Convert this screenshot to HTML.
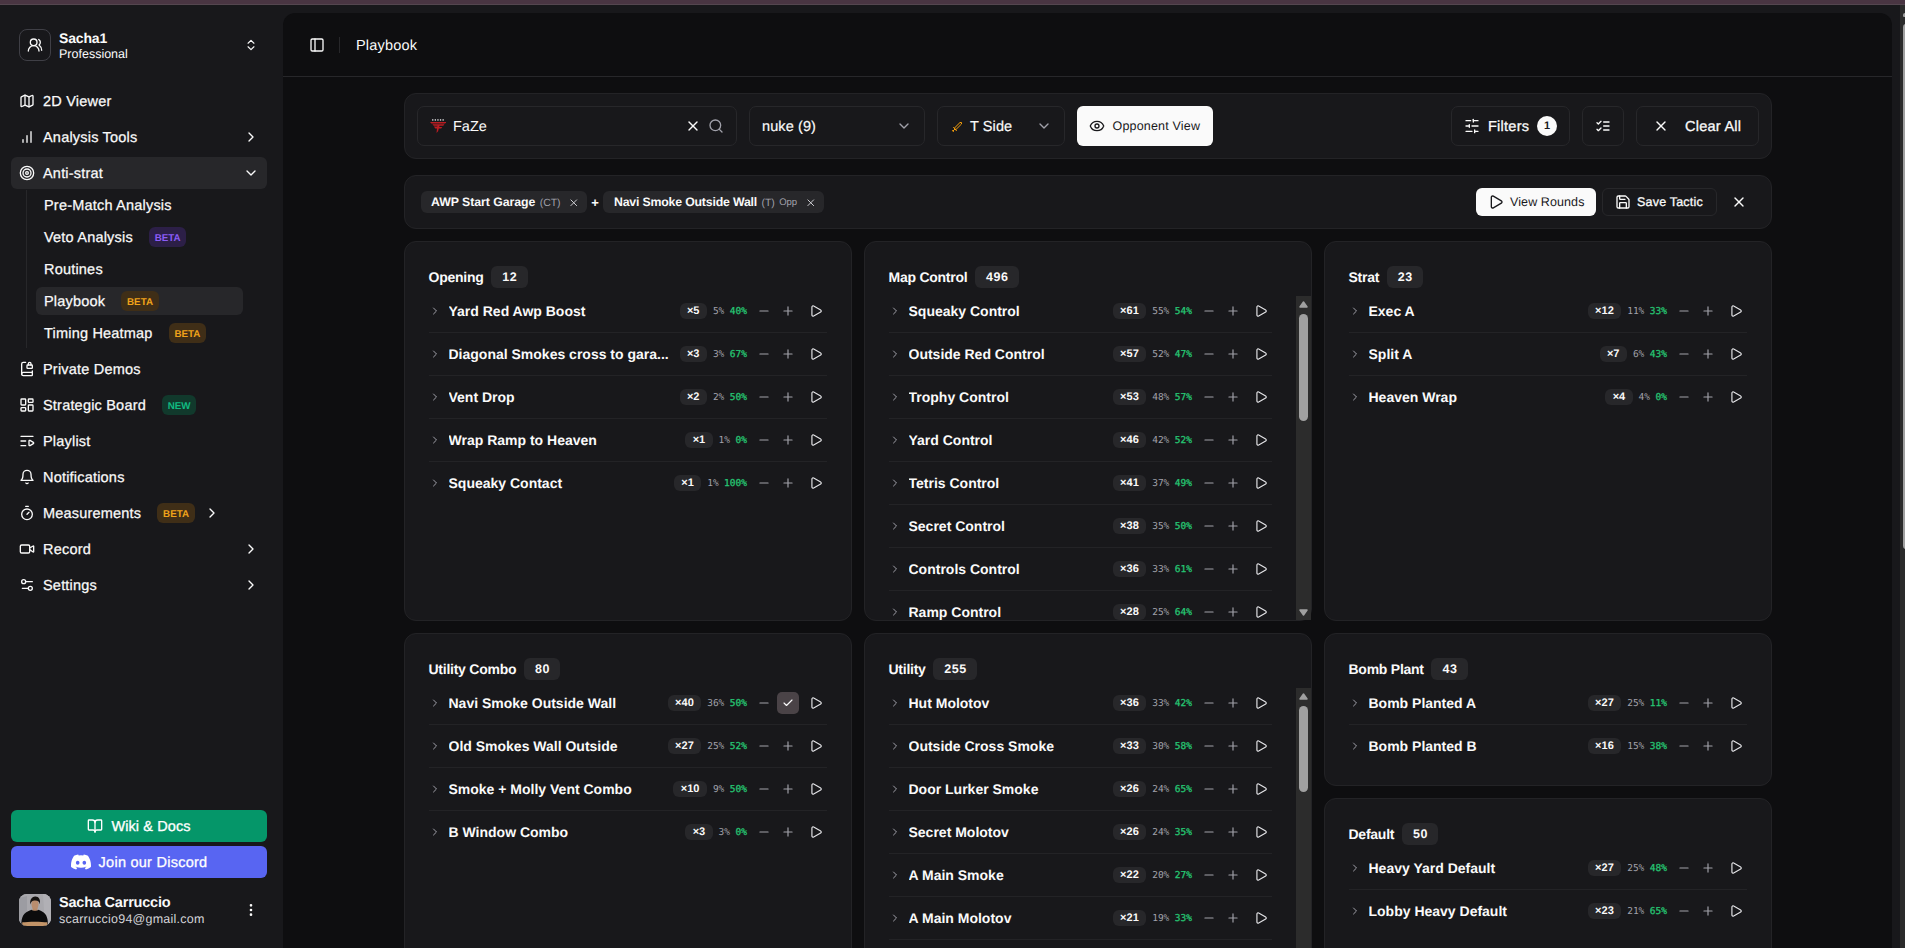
<!DOCTYPE html><html lang="en"><head><meta charset="utf-8"><title>Playbook</title><style>
*{box-sizing:border-box;margin:0;padding:0}
html,body{width:1905px;height:948px;overflow:hidden;background:#18181b}
body{position:relative;font-family:"Liberation Sans",sans-serif;color:#fafafa;font-size:14px;text-rendering:geometricPrecision}
svg{display:block;fill:none;stroke:currentColor;stroke-width:2;stroke-linecap:round;stroke-linejoin:round}
.abs{position:absolute}
#topstrip{left:0;top:0;width:1905px;height:5px;background:#493542;border-bottom:1px solid #54464f}
#sidebar{left:0;top:5px;width:283px;height:943px;background:#18181b}
#main{left:283px;top:13px;width:1609px;height:960px;background:#0e0e10;border-radius:12px 12px 0 0}
#hdrline{left:283px;top:76px;width:1609px;height:1px;background:#27272a}
#vscroll{left:1900px;top:5px;width:5px;height:943px;background:#2b2b2b}
#vthumb{left:1903px;top:24px;width:6px;height:524.5px;background:#a0a0a0;border-radius:3px}
.sb-item{position:absolute;left:11px;width:256px;height:32px;border-radius:6px;display:flex;align-items:center;padding-left:8px;font-size:14.5px;letter-spacing:.2px;font-weight:400;color:#fafafa}
.sb-item svg{width:16px;height:16px;margin-right:8px;flex:none;stroke-width:2}
.sb-item .chev{position:absolute;right:8px;top:8px;margin:0;width:16px;height:16px}
.sb-item.active{background:#27272a}
.sb-item>span:first-of-type,.sb-sub>span:first-of-type{position:relative;top:1px;-webkit-text-stroke:.25px currentColor}
.sb-sub{position:absolute;left:36px;width:207px;height:28px;border-radius:6px;display:flex;align-items:center;padding-left:8px;font-size:14.5px;letter-spacing:.2px;color:#fafafa}
.sb-sub.active{background:#27272a}
.badge{display:inline-block;font-size:9.800px;font-weight:700;border-radius:6px;padding:0 5.800px;height:20px;line-height:23px;margin-left:16px;letter-spacing:0}
.b-purple{background:#2c1f47;color:#8b5cf6}
.b-amber{background:#3f2e17;color:#f0a31a}
.b-green{background:#11392c;color:#10b981}
.card{position:absolute;background:#18181b;border:1px solid #232326;border-radius:12px}
.ctitle{position:absolute;left:23.500px;top:24px;font-size:14px;font-weight:700;letter-spacing:-.25px;display:flex;align-items:center;height:22px;white-space:nowrap}
.cnt{display:inline-block;margin-left:7.500px;background:#27272a;border-radius:6px;height:22px;line-height:22px;padding:0 10.500px 0 11.200px;font-size:12.500px;font-weight:700;letter-spacing:.55px}
.rows{position:absolute;left:0;top:48px;right:0;bottom:0;overflow:hidden;border-radius:0 0 11px 11px}
.row{position:absolute;left:24px;height:43px;display:flex;align-items:center;border-bottom:1px solid #232326}
.row.last{border-bottom-color:transparent}
.row .chv{width:12px;height:12px;color:#a1a1aa;margin-left:0;flex:none;stroke-width:2}
.row .nm{margin-left:7.500px;font-size:14px;font-weight:700;letter-spacing:0;white-space:nowrap;overflow:hidden;flex:1 1 auto;min-width:0;color:#fafafa}
.row .x{flex:none;background:#27272a;border-radius:6px;height:16px;line-height:17px;padding:0 7.400px;font-size:11px;font-weight:700;color:#fafafa;margin-left:6px}
.row .p1{flex:none;font-family:"DejaVu Sans Mono","Liberation Mono",monospace;font-size:9.5px;color:#a1a1aa;margin-left:6px}
.row .p2{flex:none;font-family:"DejaVu Sans Mono","Liberation Mono",monospace;font-size:9.5px;font-weight:400;-webkit-text-stroke:.3px #26c472;color:#26c472;margin-left:5.500px}
.row .bt{flex:none;width:24px;height:24px;display:flex;align-items:center;justify-content:center;color:#a1a1aa}
.row .bt svg{width:14px;height:14px}
.row .mn{margin-left:5px}
.row .py{margin-left:3.500px;margin-right:-.5px;color:#e4e4e7}
.row .chk{flex:none;margin:0 1px;width:22px;height:22px;border-radius:5px;background:#4a4347;display:flex;align-items:center;justify-content:center;color:#fafafa}
.row .chk svg{width:12px;height:12px;stroke-width:2.300}
.sbar{position:absolute;width:15px;background:#2c2c2c}
.sbar .th{position:absolute;left:3px;width:9px;border-radius:5px;background:#a0a0a0}
.sbar svg{position:absolute;left:3px;width:9px;height:7px;fill:#a0a0a0;stroke:#a0a0a0;stroke-width:1.500}
.sbar .up{top:5px}
.sbar .dn{bottom:4px}
.md{-webkit-text-stroke:.3px currentColor}
.md2{-webkit-text-stroke:.18px currentColor}
.fld{position:absolute;border:1px solid #27272a;border-radius:7px;background:#18181b;display:flex;align-items:center;font-size:14.5px;white-space:nowrap}
.btnw{position:absolute;background:#fafafa;color:#18181b;border-radius:6px;display:flex;align-items:center;white-space:nowrap}
.chip{position:absolute;top:15px;height:22px;background:#27272a;border-radius:6px;display:flex;align-items:center;font-size:12.300px;font-weight:700;white-space:nowrap;letter-spacing:-.05px}
.chip .g{font-weight:400;color:#a1a1aa;font-size:10.500px;margin-left:4.500px;position:relative;top:.8px}
.chip svg{width:11.500px;height:11.500px;color:#d4d4d8}
</style></head><body>
<div id="topstrip" class="abs"></div>
<div id="sidebar" class="abs"></div>
<div id="main" class="abs"></div>
<div id="hdrline" class="abs"></div>
<div id="vscroll" class="abs"></div><div id="vthumb" class="abs"></div><div class="abs" style="left:1903px;top:13px;width:4px;height:4px;background:#a0a0a0;border-radius:2px 0 0 1px"></div>
<div class="abs" style="left:19px;top:29px;width:32px;height:32px;border:1px solid #3f3f46;border-radius:8px;display:flex;align-items:center;justify-content:center"><svg viewBox="0 0 24 24" style="width:16px;height:16px"><path d="M18 21a8 8 0 0 0-16 0"/><circle cx="10" cy="8" r="5"/><path d="M22 20c0-3.37-2-6.5-4-8a5 5 0 0 0-.45-8.3"/></svg></div>
<div class="abs" style="left:59px;top:30px;font-size:14px;font-weight:700;letter-spacing:-.15px;line-height:16px">Sacha1</div>
<div class="abs" style="left:59px;top:47px;font-size:12.5px;line-height:14px">Professional</div>
<svg viewBox="0 0 24 24" class="abs" style="left:244px;top:38px;width:14px;height:14px;position:absolute;stroke-width:2"><path d="m7 15 5 5 5-5"/><path d="m7 9 5-5 5 5"/></svg>
<div class="sb-item" style="top:85px"><svg viewBox="0 0 24 24"><path d="M14.106 5.553a2 2 0 0 0 1.788 0l3.659-1.83A1 1 0 0 1 21 4.619v12.764a1 1 0 0 1-.553.894l-4.553 2.277a2 2 0 0 1-1.788 0l-4.212-2.106a2 2 0 0 0-1.788 0l-3.659 1.83A1 1 0 0 1 3 19.381V6.618a1 1 0 0 1 .553-.894l4.553-2.277a2 2 0 0 1 1.788 0z"/><path d="M15 5.764v15"/><path d="M9 3.236v15"/></svg><span>2D Viewer</span></div>
<div class="sb-item" style="top:121px"><svg viewBox="0 0 24 24"><line x1="12" x2="12" y1="20" y2="10"/><line x1="18" x2="18" y1="20" y2="4"/><line x1="6" x2="6" y1="20" y2="16"/></svg><span>Analysis Tools</span><svg viewBox="0 0 24 24" class="chev"><path d="m9 18 6-6-6-6"/></svg></div>
<div class="sb-item active" style="top:157px"><svg viewBox="0 0 24 24"><circle cx="12" cy="12" r="10"/><circle cx="12" cy="12" r="6"/><circle cx="12" cy="12" r="2"/></svg><span>Anti-strat</span><svg viewBox="0 0 24 24" class="chev"><path d="m6 9 6 6 6-6"/></svg></div>
<div class="sb-item" style="top:353px"><svg viewBox="0 0 24 24"><path d="M18 6V4a2 2 0 1 0-4 0v2"/><path d="M20 15v6a1 1 0 0 1-1 1H6.5a1 1 0 0 1 0-5H20"/><path d="M4 19.500v-15A2.500 2.500 0 0 1 6.500 2H10"/><rect x="12" y="6" width="8" height="5" rx="1"/></svg><span>Private Demos</span></div>
<div class="sb-item" style="top:389px"><svg viewBox="0 0 24 24"><rect width="7" height="9" x="3" y="3" rx="1"/><rect width="7" height="5" x="14" y="3" rx="1"/><rect width="7" height="9" x="14" y="12" rx="1"/><rect width="7" height="5" x="3" y="16" rx="1"/></svg><span>Strategic Board</span><span class="badge b-green">NEW</span></div>
<div class="sb-item" style="top:425px"><svg viewBox="0 0 24 24"><path d="M21 5H3"/><path d="M10 12H3"/><path d="M10 19H3"/><path d="M15 12.003a1 1 0 0 1 1.517-.859l4.997 2.997a1 1 0 0 1 0 1.718l-4.997 2.997a1 1 0 0 1-1.517-.860z"/></svg><span>Playlist</span></div>
<div class="sb-item" style="top:461px"><svg viewBox="0 0 24 24"><path d="M6 8a6 6 0 0 1 12 0c0 7 3 9 3 9H3s3-2 3-9"/><path d="M10.300 21a1.940 1.940 0 0 0 3.400 0"/></svg><span>Notifications</span></div>
<div class="sb-item" style="top:497px"><svg viewBox="0 0 24 24"><line x1="10" x2="14" y1="2" y2="2"/><line x1="12" x2="15" y1="14" y2="11"/><circle cx="12" cy="14" r="8"/></svg><span>Measurements</span><span class="badge b-amber">BETA</span><svg viewBox="0 0 24 24" style="margin-left:8.800px;margin-right:0"><path d="m9 18 6-6-6-6"/></svg></div>
<div class="sb-item" style="top:533px"><svg viewBox="0 0 24 24"><path d="m16 13 5.223 3.482a.5.500 0 0 0 .777-.416V7.870a.5.500 0 0 0-.752-.432L16 10.500"/><rect x="2" y="6" width="14" height="12" rx="2"/></svg><span>Record</span><svg viewBox="0 0 24 24" class="chev"><path d="m9 18 6-6-6-6"/></svg></div>
<div class="sb-item" style="top:569px"><svg viewBox="0 0 24 24"><path d="M20 7h-9"/><path d="M14 17H5"/><circle cx="17" cy="17" r="3"/><circle cx="7" cy="7" r="3"/></svg><span>Settings</span><svg viewBox="0 0 24 24" class="chev"><path d="m9 18 6-6-6-6"/></svg></div>
<div class="abs" style="left:26px;top:190px;width:1px;height:158px;background:#27272a"></div>
<div class="sb-sub" style="top:191px"><span>Pre-Match Analysis</span></div>
<div class="sb-sub" style="top:223px"><span>Veto Analysis</span><span class="badge b-purple">BETA</span></div>
<div class="sb-sub" style="top:255px"><span>Routines</span></div>
<div class="sb-sub active" style="top:287px"><span>Playbook</span><span class="badge b-amber">BETA</span></div>
<div class="sb-sub" style="top:319px"><span>Timing Heatmap</span><span class="badge b-amber">BETA</span></div>
<div class="abs" style="left:11px;top:810px;width:256px;height:32px;border-radius:6px;background:#059669;display:flex;align-items:center;justify-content:center;font-size:14.5px;font-weight:400;color:#fff"><svg viewBox="0 0 24 24" style="width:16px;height:16px;margin-right:8px"><path d="M12 7v14"/><path d="M3 18a1 1 0 0 1-1-1V4a1 1 0 0 1 1-1h5a4 4 0 0 1 4 4 4 4 0 0 1 4-4h5a1 1 0 0 1 1 1v13a1 1 0 0 1-1 1h-6a3 3 0 0 0-3 3 3 3 0 0 0-3-3z"/></svg><span class="md" style="position:relative;top:1px;letter-spacing:.1px">Wiki &amp; Docs</span></div>
<div class="abs" style="left:11px;top:846px;width:256px;height:32px;border-radius:6px;background:#5865f2;display:flex;align-items:center;justify-content:center;font-size:14.5px;font-weight:400;color:#fff"><svg viewBox="0 0 24 24" style="width:20px;height:20px;margin-right:8px;fill:#fff;stroke:none"><path d="M20.317 4.370a19.791 19.791 0 0 0-4.885-1.515.074.074 0 0 0-.079.037c-.211.375-.445.865-.608 1.250a18.270 18.270 0 0 0-5.487 0 12.640 12.640 0 0 0-.618-1.250.077.077 0 0 0-.078-.037 19.736 19.736 0 0 0-4.885 1.515.070.070 0 0 0-.032.028C.533 9.046-.319 13.580.099 18.058a.082.082 0 0 0 .031.056 19.900 19.900 0 0 0 5.993 3.030.078.078 0 0 0 .084-.028c.462-.630.873-1.295 1.226-1.994a.076.076 0 0 0-.042-.106 13.107 13.107 0 0 1-1.872-.892.077.077 0 0 1-.008-.128c.126-.094.252-.192.372-.291a.074.074 0 0 1 .078-.011c3.928 1.793 8.180 1.793 12.061 0a.074.074 0 0 1 .079.010c.120.099.246.198.373.292a.077.077 0 0 1-.007.128 12.299 12.299 0 0 1-1.873.891.077.077 0 0 0-.041.107c.360.698.772 1.363 1.225 1.993a.076.076 0 0 0 .084.029 19.839 19.839 0 0 0 6.002-3.030.077.077 0 0 0 .031-.055c.500-5.177-.838-9.674-3.548-13.660a.061.061 0 0 0-.031-.029zM8.020 15.331c-1.182 0-2.157-1.086-2.157-2.419 0-1.333.956-2.419 2.157-2.419 1.211 0 2.176 1.095 2.157 2.419 0 1.333-.956 2.419-2.157 2.419zm7.975 0c-1.183 0-2.157-1.086-2.157-2.419 0-1.333.955-2.419 2.157-2.419 1.211 0 2.176 1.095 2.157 2.419 0 1.333-.946 2.419-2.157 2.419z"/></svg><span class="md" style="position:relative;top:1px;letter-spacing:.25px">Join our Discord</span></div>
<div class="abs" style="left:19px;top:894px;width:32px;height:32px;border-radius:8px;overflow:hidden;background:#a9a9ad"><svg viewBox="0 0 32 32" style="width:32px;height:32px;stroke:none"><rect width="32" height="32" fill="#a9a8ad"/><path d="M0 4 8 2v30H0z" fill="#9c9ca2"/><path d="M24 0h8v32h-6z" fill="#b1b0b5"/><rect x="13.500" y="13" width="5" height="5" fill="#b88a68"/><ellipse cx="16" cy="10.300" rx="3.500" ry="4.600" fill="#b98d6e"/><path d="M11.400 10.500c-.9-4.500 1.200-8 4.800-8.100 3.700-.1 5.600 3.300 4.700 7.800-.6-2.400-1.500-3.700-4.700-3.700s-4 1.300-4.800 4z" fill="#14110f"/><path d="M2.300 32c0-9 1.700-13.500 10.200-16.300 1.500 1.500 5.500 1.500 7 0C27.500 18.500 29 23 29 32z" fill="#0c0c0d"/><path d="M3.300 28.300c6-.9 19-.9 25 0l.3 3.700H3.100z" fill="#c39468"/></svg></div>
<div class="abs" style="left:59px;top:895px;font-size:14.5px;font-weight:700;letter-spacing:-.2px;line-height:17px;white-space:nowrap">Sacha Carruccio</div>
<div class="abs" style="left:59px;top:912px;font-size:12.5px;letter-spacing:.23px;line-height:15px;color:#d4d4d8;white-space:nowrap">scarruccio94@gmail.com</div>
<svg viewBox="0 0 24 24" class="abs" style="left:243px;top:902px;width:16px;height:16px;position:absolute"><circle cx="12" cy="12" r="1"/><circle cx="12" cy="5" r="1"/><circle cx="12" cy="19" r="1"/></svg>
<svg viewBox="0 0 24 24" class="abs" style="left:309px;top:37px;width:16px;height:16px;position:absolute"><rect width="18" height="18" x="3" y="3" rx="2"/><path d="M9 3v18"/></svg>
<div class="abs" style="left:339px;top:37px;width:1px;height:16px;background:#27272a"></div>
<div class="abs" style="left:356px;top:37px;font-size:14.5px;line-height:18px;letter-spacing:.2px" class="md">Playbook</div>
<div class="card" style="left:404px;top:93px;width:1368px;height:66px"></div>
<div class="fld" style="left:417px;top:106px;width:320px;height:40px"><svg viewBox="0 0 16.200 14" style="position:absolute;left:12px;top:12px;width:16.200px;height:14px;stroke:none"><g fill="#b3b3b6"><rect x="2.100" y="0" width="1.300" height="1.800"/><rect x="4.700" y="0" width="1.300" height="1.800"/><rect x="7.300" y="0" width="1.300" height="1.800"/><rect x="9.900" y="0" width="1.300" height="1.800"/><rect x="12.500" y="0" width="1.300" height="1.800"/></g><g fill="#bb1c22"><path d="M0 3h16.200l-1.100 1.400H1.300z"/><path d="M2.400 5.300h12l-1.100 1.500H9.600l-.4 1.300h3.100l-1.100 1.500H8.800l-.7 2.600L6.500 14l.5-4.600H5.300L3.900 7.600h3.300l.3-.8H3.700z"/></g></svg><span style="position:absolute;left:35px;top:11px;line-height:18px">FaZe</span><svg viewBox="0 0 24 24" style="position:absolute;left:267px;top:11.300px;width:16px;height:16px"><path d="M18 6 6 18"/><path d="m6 6 12 12"/></svg><svg viewBox="0 0 24 24" style="position:absolute;left:290px;top:11.300px;width:16px;height:16px;color:#a1a1aa"><circle cx="11" cy="11" r="8"/><path d="m21 21-4.300-4.300"/></svg></div>
<div class="fld" style="left:749px;top:106px;width:176px;height:40px"><span class="md2" style="position:absolute;left:12px;top:11px;line-height:18px;letter-spacing:.1px">nuke (9)</span><svg viewBox="0 0 24 24" style="position:absolute;left:146px;top:11px;width:16px;height:16px;color:#a1a1aa"><path d="m6 9 6 6 6-6"/></svg></div>
<div class="fld" style="left:937px;top:106px;width:128px;height:40px"><svg viewBox="0 0 24 24" style="position:absolute;left:13px;top:14px;width:12px;height:12px;color:#f59e0b;transform:scaleX(-1)"><polyline points="14.5 17.5 3 6 3 3 6 3 17.5 14.5"/><line x1="13" x2="19" y1="19" y2="13"/><line x1="16" x2="20" y1="16" y2="20"/><line x1="19" x2="21" y1="21" y2="19"/></svg><span class="md2" style="position:absolute;left:32px;top:11px;line-height:18px;letter-spacing:.1px">T Side</span><svg viewBox="0 0 24 24" style="position:absolute;left:98px;top:11px;width:16px;height:16px;color:#a1a1aa"><path d="m6 9 6 6 6-6"/></svg></div>
<div class="btnw" style="left:1077px;top:106px;width:136px;height:40px;font-size:12.5px"><svg viewBox="0 0 24 24" style="position:absolute;left:12px;top:12px;width:16px;height:16px"><path d="M2.062 12.348a1 1 0 0 1 0-.696 10.750 10.750 0 0 1 19.876 0 1 1 0 0 1 0 .696 10.750 10.750 0 0 1-19.876 0"/><circle cx="12" cy="12" r="3"/></svg><span style="position:absolute;left:35.500px;top:12px;line-height:16px;letter-spacing:.18px">Opponent View</span></div>
<div class="fld" style="left:1451px;top:106px;width:119px;height:40px"><svg viewBox="0 0 24 24" style="position:absolute;left:12px;top:11.200px;width:16px;height:16px"><line x1="21" x2="14" y1="4" y2="4"/><line x1="10" x2="3" y1="4" y2="4"/><line x1="21" x2="12" y1="12" y2="12"/><line x1="8" x2="3" y1="12" y2="12"/><line x1="21" x2="16" y1="20" y2="20"/><line x1="12" x2="3" y1="20" y2="20"/><line x1="14" x2="14" y1="2" y2="6"/><line x1="8" x2="8" y1="10" y2="14"/><line x1="16" x2="16" y1="18" y2="22"/></svg><span style="position:absolute;left:36px;top:11px;line-height:18px;letter-spacing:.25px" class="md">Filters</span><span style="position:absolute;left:85px;top:9px;width:20px;height:20px;border-radius:10px;background:#fafafa;color:#18181b;font-size:11px;font-weight:700;line-height:21px;text-align:center">1</span></div>
<div class="fld" style="left:1582px;top:106px;width:42px;height:40px"><svg viewBox="0 0 24 24" style="position:absolute;left:12px;top:11.200px;width:16px;height:16px"><path d="m3 17 2 2 4-4"/><path d="m3 7 2 2 4-4"/><path d="M13 6h8"/><path d="M13 12h8"/><path d="M13 18h8"/></svg></div>
<div class="fld" style="left:1636px;top:106px;width:123px;height:40px"><svg viewBox="0 0 24 24" style="position:absolute;left:16px;top:11.200px;width:16px;height:16px"><path d="M18 6 6 18"/><path d="m6 6 12 12"/></svg><span style="position:absolute;left:48px;top:11px;line-height:18px;letter-spacing:.25px" class="md">Clear All</span></div>
<div class="card" style="left:404px;top:175px;width:1368px;height:54px"><div class="chip" style="left:16px;width:166px"><span style="margin-left:10px">AWP Start Garage</span><span class="g">(CT)</span><svg viewBox="0 0 24 24" style="position:absolute;right:7.500px;top:5.500px"><path d="M18 6 6 18"/><path d="m6 6 12 12"/></svg></div><span style="position:absolute;left:186.300px;top:18px;font-size:13px;font-weight:700;line-height:18px">+</span><div class="chip" style="left:198px;width:221px"><span style="margin-left:11px;letter-spacing:-.18px">Navi Smoke Outside Wall</span><span class="g">(T)</span><span class="g" style="font-size:9.5px">Opp</span><svg viewBox="0 0 24 24" style="position:absolute;right:7.500px;top:5.500px"><path d="M18 6 6 18"/><path d="m6 6 12 12"/></svg></div><div class="btnw" style="left:1071px;top:12px;width:120px;height:28px;font-size:12.5px"><svg viewBox="0 0 24 24" style="position:absolute;left:11.500px;top:6px;width:16px;height:16px"><path d="M5 5a2 2 0 0 1 3.008-1.728l11.997 6.998a2 2 0 0 1 .003 3.458l-12 7A2 2 0 0 1 5 19z"/></svg><span style="position:absolute;left:34px;top:6px;line-height:16px;letter-spacing:.1px">View Rounds</span></div><div class="fld" style="left:1197px;top:12px;width:115px;height:28px;font-size:12.5px;font-weight:400;border-radius:6px"><svg viewBox="0 0 24 24" style="position:absolute;left:11.500px;top:5px;width:16px;height:16px"><path d="M15.200 3a2 2 0 0 1 1.400.600l3.800 3.800a2 2 0 0 1 .600 1.400V19a2 2 0 0 1-2 2H5a2 2 0 0 1-2-2V5a2 2 0 0 1 2-2z"/><path d="M17 21v-7a1 1 0 0 0-1-1H8a1 1 0 0 0-1 1v7"/><path d="M7 3v4a1 1 0 0 0 1 1h7"/></svg><span style="position:absolute;left:34px;top:5px;line-height:16px;letter-spacing:.2px" class="md">Save Tactic</span></div><svg viewBox="0 0 24 24" style="position:absolute;left:1326.200px;top:18px;width:16px;height:16px"><path d="M18 6 6 18"/><path d="m6 6 12 12"/></svg></div>
<div class="card" style="left:404px;top:241px;width:448px;height:380px"><div class="ctitle">Opening<span class="cnt">12</span></div><div class="rows"><div class="row" style="top:0px;width:398px"><svg viewBox="0 0 24 24" class="chv"><path d="m9 18 6-6-6-6"/></svg><span class="nm">Yard Red Awp Boost</span><span class="x">×5</span><span class="p1">5%</span><span class="p2">40%</span><span class="bt mn"><svg viewBox="0 0 24 24"><path d="M5 12h14"/></svg></span><span class="bt"><svg viewBox="0 0 24 24"><path d="M5 12h14"/><path d="M12 5v14"/></svg></span><span class="bt py"><svg viewBox="0 0 24 24"><path d="M5 5a2 2 0 0 1 3.008-1.728l11.997 6.998a2 2 0 0 1 .003 3.458l-12 7A2 2 0 0 1 5 19z"/></svg></span></div><div class="row" style="top:43px;width:398px"><svg viewBox="0 0 24 24" class="chv"><path d="m9 18 6-6-6-6"/></svg><span class="nm">Diagonal Smokes cross to gara...</span><span class="x">×3</span><span class="p1">3%</span><span class="p2">67%</span><span class="bt mn"><svg viewBox="0 0 24 24"><path d="M5 12h14"/></svg></span><span class="bt"><svg viewBox="0 0 24 24"><path d="M5 12h14"/><path d="M12 5v14"/></svg></span><span class="bt py"><svg viewBox="0 0 24 24"><path d="M5 5a2 2 0 0 1 3.008-1.728l11.997 6.998a2 2 0 0 1 .003 3.458l-12 7A2 2 0 0 1 5 19z"/></svg></span></div><div class="row" style="top:86px;width:398px"><svg viewBox="0 0 24 24" class="chv"><path d="m9 18 6-6-6-6"/></svg><span class="nm">Vent Drop</span><span class="x">×2</span><span class="p1">2%</span><span class="p2">50%</span><span class="bt mn"><svg viewBox="0 0 24 24"><path d="M5 12h14"/></svg></span><span class="bt"><svg viewBox="0 0 24 24"><path d="M5 12h14"/><path d="M12 5v14"/></svg></span><span class="bt py"><svg viewBox="0 0 24 24"><path d="M5 5a2 2 0 0 1 3.008-1.728l11.997 6.998a2 2 0 0 1 .003 3.458l-12 7A2 2 0 0 1 5 19z"/></svg></span></div><div class="row" style="top:129px;width:398px"><svg viewBox="0 0 24 24" class="chv"><path d="m9 18 6-6-6-6"/></svg><span class="nm">Wrap Ramp to Heaven</span><span class="x">×1</span><span class="p1">1%</span><span class="p2">0%</span><span class="bt mn"><svg viewBox="0 0 24 24"><path d="M5 12h14"/></svg></span><span class="bt"><svg viewBox="0 0 24 24"><path d="M5 12h14"/><path d="M12 5v14"/></svg></span><span class="bt py"><svg viewBox="0 0 24 24"><path d="M5 5a2 2 0 0 1 3.008-1.728l11.997 6.998a2 2 0 0 1 .003 3.458l-12 7A2 2 0 0 1 5 19z"/></svg></span></div><div class="row last" style="top:172px;width:398px"><svg viewBox="0 0 24 24" class="chv"><path d="m9 18 6-6-6-6"/></svg><span class="nm">Squeaky Contact</span><span class="x">×1</span><span class="p1">1%</span><span class="p2">100%</span><span class="bt mn"><svg viewBox="0 0 24 24"><path d="M5 12h14"/></svg></span><span class="bt"><svg viewBox="0 0 24 24"><path d="M5 12h14"/><path d="M12 5v14"/></svg></span><span class="bt py"><svg viewBox="0 0 24 24"><path d="M5 5a2 2 0 0 1 3.008-1.728l11.997 6.998a2 2 0 0 1 .003 3.458l-12 7A2 2 0 0 1 5 19z"/></svg></span></div></div></div>
<div class="card" style="left:864px;top:241px;width:448px;height:380px"><div class="ctitle">Map Control<span class="cnt">496</span></div><div class="rows"><div class="row" style="top:0px;width:383px"><svg viewBox="0 0 24 24" class="chv"><path d="m9 18 6-6-6-6"/></svg><span class="nm">Squeaky Control</span><span class="x">×61</span><span class="p1">55%</span><span class="p2">54%</span><span class="bt mn"><svg viewBox="0 0 24 24"><path d="M5 12h14"/></svg></span><span class="bt"><svg viewBox="0 0 24 24"><path d="M5 12h14"/><path d="M12 5v14"/></svg></span><span class="bt py"><svg viewBox="0 0 24 24"><path d="M5 5a2 2 0 0 1 3.008-1.728l11.997 6.998a2 2 0 0 1 .003 3.458l-12 7A2 2 0 0 1 5 19z"/></svg></span></div><div class="row" style="top:43px;width:383px"><svg viewBox="0 0 24 24" class="chv"><path d="m9 18 6-6-6-6"/></svg><span class="nm">Outside Red Control</span><span class="x">×57</span><span class="p1">52%</span><span class="p2">47%</span><span class="bt mn"><svg viewBox="0 0 24 24"><path d="M5 12h14"/></svg></span><span class="bt"><svg viewBox="0 0 24 24"><path d="M5 12h14"/><path d="M12 5v14"/></svg></span><span class="bt py"><svg viewBox="0 0 24 24"><path d="M5 5a2 2 0 0 1 3.008-1.728l11.997 6.998a2 2 0 0 1 .003 3.458l-12 7A2 2 0 0 1 5 19z"/></svg></span></div><div class="row" style="top:86px;width:383px"><svg viewBox="0 0 24 24" class="chv"><path d="m9 18 6-6-6-6"/></svg><span class="nm">Trophy Control</span><span class="x">×53</span><span class="p1">48%</span><span class="p2">57%</span><span class="bt mn"><svg viewBox="0 0 24 24"><path d="M5 12h14"/></svg></span><span class="bt"><svg viewBox="0 0 24 24"><path d="M5 12h14"/><path d="M12 5v14"/></svg></span><span class="bt py"><svg viewBox="0 0 24 24"><path d="M5 5a2 2 0 0 1 3.008-1.728l11.997 6.998a2 2 0 0 1 .003 3.458l-12 7A2 2 0 0 1 5 19z"/></svg></span></div><div class="row" style="top:129px;width:383px"><svg viewBox="0 0 24 24" class="chv"><path d="m9 18 6-6-6-6"/></svg><span class="nm">Yard Control</span><span class="x">×46</span><span class="p1">42%</span><span class="p2">52%</span><span class="bt mn"><svg viewBox="0 0 24 24"><path d="M5 12h14"/></svg></span><span class="bt"><svg viewBox="0 0 24 24"><path d="M5 12h14"/><path d="M12 5v14"/></svg></span><span class="bt py"><svg viewBox="0 0 24 24"><path d="M5 5a2 2 0 0 1 3.008-1.728l11.997 6.998a2 2 0 0 1 .003 3.458l-12 7A2 2 0 0 1 5 19z"/></svg></span></div><div class="row" style="top:172px;width:383px"><svg viewBox="0 0 24 24" class="chv"><path d="m9 18 6-6-6-6"/></svg><span class="nm">Tetris Control</span><span class="x">×41</span><span class="p1">37%</span><span class="p2">49%</span><span class="bt mn"><svg viewBox="0 0 24 24"><path d="M5 12h14"/></svg></span><span class="bt"><svg viewBox="0 0 24 24"><path d="M5 12h14"/><path d="M12 5v14"/></svg></span><span class="bt py"><svg viewBox="0 0 24 24"><path d="M5 5a2 2 0 0 1 3.008-1.728l11.997 6.998a2 2 0 0 1 .003 3.458l-12 7A2 2 0 0 1 5 19z"/></svg></span></div><div class="row" style="top:215px;width:383px"><svg viewBox="0 0 24 24" class="chv"><path d="m9 18 6-6-6-6"/></svg><span class="nm">Secret Control</span><span class="x">×38</span><span class="p1">35%</span><span class="p2">50%</span><span class="bt mn"><svg viewBox="0 0 24 24"><path d="M5 12h14"/></svg></span><span class="bt"><svg viewBox="0 0 24 24"><path d="M5 12h14"/><path d="M12 5v14"/></svg></span><span class="bt py"><svg viewBox="0 0 24 24"><path d="M5 5a2 2 0 0 1 3.008-1.728l11.997 6.998a2 2 0 0 1 .003 3.458l-12 7A2 2 0 0 1 5 19z"/></svg></span></div><div class="row" style="top:258px;width:383px"><svg viewBox="0 0 24 24" class="chv"><path d="m9 18 6-6-6-6"/></svg><span class="nm">Controls Control</span><span class="x">×36</span><span class="p1">33%</span><span class="p2">61%</span><span class="bt mn"><svg viewBox="0 0 24 24"><path d="M5 12h14"/></svg></span><span class="bt"><svg viewBox="0 0 24 24"><path d="M5 12h14"/><path d="M12 5v14"/></svg></span><span class="bt py"><svg viewBox="0 0 24 24"><path d="M5 5a2 2 0 0 1 3.008-1.728l11.997 6.998a2 2 0 0 1 .003 3.458l-12 7A2 2 0 0 1 5 19z"/></svg></span></div><div class="row" style="top:301px;width:383px"><svg viewBox="0 0 24 24" class="chv"><path d="m9 18 6-6-6-6"/></svg><span class="nm">Ramp Control</span><span class="x">×28</span><span class="p1">25%</span><span class="p2">64%</span><span class="bt mn"><svg viewBox="0 0 24 24"><path d="M5 12h14"/></svg></span><span class="bt"><svg viewBox="0 0 24 24"><path d="M5 12h14"/><path d="M12 5v14"/></svg></span><span class="bt py"><svg viewBox="0 0 24 24"><path d="M5 5a2 2 0 0 1 3.008-1.728l11.997 6.998a2 2 0 0 1 .003 3.458l-12 7A2 2 0 0 1 5 19z"/></svg></span></div><div class="row last" style="top:344px;width:383px"><svg viewBox="0 0 24 24" class="chv"><path d="m9 18 6-6-6-6"/></svg><span class="nm">Lobby Control</span><span class="x">×20</span><span class="p1">18%</span><span class="p2">50%</span><span class="bt mn"><svg viewBox="0 0 24 24"><path d="M5 12h14"/></svg></span><span class="bt"><svg viewBox="0 0 24 24"><path d="M5 12h14"/><path d="M12 5v14"/></svg></span><span class="bt py"><svg viewBox="0 0 24 24"><path d="M5 5a2 2 0 0 1 3.008-1.728l11.997 6.998a2 2 0 0 1 .003 3.458l-12 7A2 2 0 0 1 5 19z"/></svg></span></div></div><div class="sbar" style="left:431px;top:54px;height:324px"><svg class="up" viewBox="0 0 9 7"><path d="M4.500 1 8 6H1z"/></svg><div class="th" style="top:17.6px;height:107px"></div><svg class="dn" viewBox="0 0 9 7"><path d="M4.500 6 8 1H1z"/></svg></div></div>
<div class="card" style="left:1324px;top:241px;width:448px;height:380px"><div class="ctitle">Strat<span class="cnt">23</span></div><div class="rows"><div class="row" style="top:0px;width:398px"><svg viewBox="0 0 24 24" class="chv"><path d="m9 18 6-6-6-6"/></svg><span class="nm">Exec A</span><span class="x">×12</span><span class="p1">11%</span><span class="p2">33%</span><span class="bt mn"><svg viewBox="0 0 24 24"><path d="M5 12h14"/></svg></span><span class="bt"><svg viewBox="0 0 24 24"><path d="M5 12h14"/><path d="M12 5v14"/></svg></span><span class="bt py"><svg viewBox="0 0 24 24"><path d="M5 5a2 2 0 0 1 3.008-1.728l11.997 6.998a2 2 0 0 1 .003 3.458l-12 7A2 2 0 0 1 5 19z"/></svg></span></div><div class="row" style="top:43px;width:398px"><svg viewBox="0 0 24 24" class="chv"><path d="m9 18 6-6-6-6"/></svg><span class="nm">Split A</span><span class="x">×7</span><span class="p1">6%</span><span class="p2">43%</span><span class="bt mn"><svg viewBox="0 0 24 24"><path d="M5 12h14"/></svg></span><span class="bt"><svg viewBox="0 0 24 24"><path d="M5 12h14"/><path d="M12 5v14"/></svg></span><span class="bt py"><svg viewBox="0 0 24 24"><path d="M5 5a2 2 0 0 1 3.008-1.728l11.997 6.998a2 2 0 0 1 .003 3.458l-12 7A2 2 0 0 1 5 19z"/></svg></span></div><div class="row last" style="top:86px;width:398px"><svg viewBox="0 0 24 24" class="chv"><path d="m9 18 6-6-6-6"/></svg><span class="nm">Heaven Wrap</span><span class="x">×4</span><span class="p1">4%</span><span class="p2">0%</span><span class="bt mn"><svg viewBox="0 0 24 24"><path d="M5 12h14"/></svg></span><span class="bt"><svg viewBox="0 0 24 24"><path d="M5 12h14"/><path d="M12 5v14"/></svg></span><span class="bt py"><svg viewBox="0 0 24 24"><path d="M5 5a2 2 0 0 1 3.008-1.728l11.997 6.998a2 2 0 0 1 .003 3.458l-12 7A2 2 0 0 1 5 19z"/></svg></span></div></div></div>
<div class="card" style="left:404px;top:633px;width:448px;height:380px"><div class="ctitle">Utility Combo<span class="cnt">80</span></div><div class="rows"><div class="row" style="top:0px;width:398px"><svg viewBox="0 0 24 24" class="chv"><path d="m9 18 6-6-6-6"/></svg><span class="nm">Navi Smoke Outside Wall</span><span class="x">×40</span><span class="p1">36%</span><span class="p2">50%</span><span class="bt mn"><svg viewBox="0 0 24 24"><path d="M5 12h14"/></svg></span><span class="chk"><svg viewBox="0 0 24 24"><path d="M20 6 9 17l-5-5"/></svg></span><span class="bt py"><svg viewBox="0 0 24 24"><path d="M5 5a2 2 0 0 1 3.008-1.728l11.997 6.998a2 2 0 0 1 .003 3.458l-12 7A2 2 0 0 1 5 19z"/></svg></span></div><div class="row" style="top:43px;width:398px"><svg viewBox="0 0 24 24" class="chv"><path d="m9 18 6-6-6-6"/></svg><span class="nm">Old Smokes Wall Outside</span><span class="x">×27</span><span class="p1">25%</span><span class="p2">52%</span><span class="bt mn"><svg viewBox="0 0 24 24"><path d="M5 12h14"/></svg></span><span class="bt"><svg viewBox="0 0 24 24"><path d="M5 12h14"/><path d="M12 5v14"/></svg></span><span class="bt py"><svg viewBox="0 0 24 24"><path d="M5 5a2 2 0 0 1 3.008-1.728l11.997 6.998a2 2 0 0 1 .003 3.458l-12 7A2 2 0 0 1 5 19z"/></svg></span></div><div class="row" style="top:86px;width:398px"><svg viewBox="0 0 24 24" class="chv"><path d="m9 18 6-6-6-6"/></svg><span class="nm">Smoke + Molly Vent Combo</span><span class="x">×10</span><span class="p1">9%</span><span class="p2">50%</span><span class="bt mn"><svg viewBox="0 0 24 24"><path d="M5 12h14"/></svg></span><span class="bt"><svg viewBox="0 0 24 24"><path d="M5 12h14"/><path d="M12 5v14"/></svg></span><span class="bt py"><svg viewBox="0 0 24 24"><path d="M5 5a2 2 0 0 1 3.008-1.728l11.997 6.998a2 2 0 0 1 .003 3.458l-12 7A2 2 0 0 1 5 19z"/></svg></span></div><div class="row last" style="top:129px;width:398px"><svg viewBox="0 0 24 24" class="chv"><path d="m9 18 6-6-6-6"/></svg><span class="nm">B Window Combo</span><span class="x">×3</span><span class="p1">3%</span><span class="p2">0%</span><span class="bt mn"><svg viewBox="0 0 24 24"><path d="M5 12h14"/></svg></span><span class="bt"><svg viewBox="0 0 24 24"><path d="M5 12h14"/><path d="M12 5v14"/></svg></span><span class="bt py"><svg viewBox="0 0 24 24"><path d="M5 5a2 2 0 0 1 3.008-1.728l11.997 6.998a2 2 0 0 1 .003 3.458l-12 7A2 2 0 0 1 5 19z"/></svg></span></div></div></div>
<div class="card" style="left:864px;top:633px;width:448px;height:380px"><div class="ctitle">Utility<span class="cnt">255</span></div><div class="rows"><div class="row" style="top:0px;width:383px"><svg viewBox="0 0 24 24" class="chv"><path d="m9 18 6-6-6-6"/></svg><span class="nm">Hut Molotov</span><span class="x">×36</span><span class="p1">33%</span><span class="p2">42%</span><span class="bt mn"><svg viewBox="0 0 24 24"><path d="M5 12h14"/></svg></span><span class="bt"><svg viewBox="0 0 24 24"><path d="M5 12h14"/><path d="M12 5v14"/></svg></span><span class="bt py"><svg viewBox="0 0 24 24"><path d="M5 5a2 2 0 0 1 3.008-1.728l11.997 6.998a2 2 0 0 1 .003 3.458l-12 7A2 2 0 0 1 5 19z"/></svg></span></div><div class="row" style="top:43px;width:383px"><svg viewBox="0 0 24 24" class="chv"><path d="m9 18 6-6-6-6"/></svg><span class="nm">Outside Cross Smoke</span><span class="x">×33</span><span class="p1">30%</span><span class="p2">58%</span><span class="bt mn"><svg viewBox="0 0 24 24"><path d="M5 12h14"/></svg></span><span class="bt"><svg viewBox="0 0 24 24"><path d="M5 12h14"/><path d="M12 5v14"/></svg></span><span class="bt py"><svg viewBox="0 0 24 24"><path d="M5 5a2 2 0 0 1 3.008-1.728l11.997 6.998a2 2 0 0 1 .003 3.458l-12 7A2 2 0 0 1 5 19z"/></svg></span></div><div class="row" style="top:86px;width:383px"><svg viewBox="0 0 24 24" class="chv"><path d="m9 18 6-6-6-6"/></svg><span class="nm">Door Lurker Smoke</span><span class="x">×26</span><span class="p1">24%</span><span class="p2">65%</span><span class="bt mn"><svg viewBox="0 0 24 24"><path d="M5 12h14"/></svg></span><span class="bt"><svg viewBox="0 0 24 24"><path d="M5 12h14"/><path d="M12 5v14"/></svg></span><span class="bt py"><svg viewBox="0 0 24 24"><path d="M5 5a2 2 0 0 1 3.008-1.728l11.997 6.998a2 2 0 0 1 .003 3.458l-12 7A2 2 0 0 1 5 19z"/></svg></span></div><div class="row" style="top:129px;width:383px"><svg viewBox="0 0 24 24" class="chv"><path d="m9 18 6-6-6-6"/></svg><span class="nm">Secret Molotov</span><span class="x">×26</span><span class="p1">24%</span><span class="p2">35%</span><span class="bt mn"><svg viewBox="0 0 24 24"><path d="M5 12h14"/></svg></span><span class="bt"><svg viewBox="0 0 24 24"><path d="M5 12h14"/><path d="M12 5v14"/></svg></span><span class="bt py"><svg viewBox="0 0 24 24"><path d="M5 5a2 2 0 0 1 3.008-1.728l11.997 6.998a2 2 0 0 1 .003 3.458l-12 7A2 2 0 0 1 5 19z"/></svg></span></div><div class="row" style="top:172px;width:383px"><svg viewBox="0 0 24 24" class="chv"><path d="m9 18 6-6-6-6"/></svg><span class="nm">A Main Smoke</span><span class="x">×22</span><span class="p1">20%</span><span class="p2">27%</span><span class="bt mn"><svg viewBox="0 0 24 24"><path d="M5 12h14"/></svg></span><span class="bt"><svg viewBox="0 0 24 24"><path d="M5 12h14"/><path d="M12 5v14"/></svg></span><span class="bt py"><svg viewBox="0 0 24 24"><path d="M5 5a2 2 0 0 1 3.008-1.728l11.997 6.998a2 2 0 0 1 .003 3.458l-12 7A2 2 0 0 1 5 19z"/></svg></span></div><div class="row" style="top:215px;width:383px"><svg viewBox="0 0 24 24" class="chv"><path d="m9 18 6-6-6-6"/></svg><span class="nm">A Main Molotov</span><span class="x">×21</span><span class="p1">19%</span><span class="p2">33%</span><span class="bt mn"><svg viewBox="0 0 24 24"><path d="M5 12h14"/></svg></span><span class="bt"><svg viewBox="0 0 24 24"><path d="M5 12h14"/><path d="M12 5v14"/></svg></span><span class="bt py"><svg viewBox="0 0 24 24"><path d="M5 5a2 2 0 0 1 3.008-1.728l11.997 6.998a2 2 0 0 1 .003 3.458l-12 7A2 2 0 0 1 5 19z"/></svg></span></div><div class="row" style="top:258px;width:383px"><svg viewBox="0 0 24 24" class="chv"><path d="m9 18 6-6-6-6"/></svg><span class="nm">Ramp Smoke</span><span class="x">×19</span><span class="p1">17%</span><span class="p2">47%</span><span class="bt mn"><svg viewBox="0 0 24 24"><path d="M5 12h14"/></svg></span><span class="bt"><svg viewBox="0 0 24 24"><path d="M5 12h14"/><path d="M12 5v14"/></svg></span><span class="bt py"><svg viewBox="0 0 24 24"><path d="M5 5a2 2 0 0 1 3.008-1.728l11.997 6.998a2 2 0 0 1 .003 3.458l-12 7A2 2 0 0 1 5 19z"/></svg></span></div><div class="row last" style="top:301px;width:383px"><svg viewBox="0 0 24 24" class="chv"><path d="m9 18 6-6-6-6"/></svg><span class="nm">Heaven Smoke</span><span class="x">×17</span><span class="p1">15%</span><span class="p2">41%</span><span class="bt mn"><svg viewBox="0 0 24 24"><path d="M5 12h14"/></svg></span><span class="bt"><svg viewBox="0 0 24 24"><path d="M5 12h14"/><path d="M12 5v14"/></svg></span><span class="bt py"><svg viewBox="0 0 24 24"><path d="M5 5a2 2 0 0 1 3.008-1.728l11.997 6.998a2 2 0 0 1 .003 3.458l-12 7A2 2 0 0 1 5 19z"/></svg></span></div></div><div class="sbar" style="left:431px;top:54px;height:324px"><svg class="up" viewBox="0 0 9 7"><path d="M4.500 1 8 6H1z"/></svg><div class="th" style="top:17.8px;height:86px"></div><svg class="dn" viewBox="0 0 9 7"><path d="M4.500 6 8 1H1z"/></svg></div></div>
<div class="card" style="left:1324px;top:633px;width:448px;height:153px"><div class="ctitle">Bomb Plant<span class="cnt">43</span></div><div class="rows"><div class="row" style="top:0px;width:398px"><svg viewBox="0 0 24 24" class="chv"><path d="m9 18 6-6-6-6"/></svg><span class="nm">Bomb Planted A</span><span class="x">×27</span><span class="p1">25%</span><span class="p2">11%</span><span class="bt mn"><svg viewBox="0 0 24 24"><path d="M5 12h14"/></svg></span><span class="bt"><svg viewBox="0 0 24 24"><path d="M5 12h14"/><path d="M12 5v14"/></svg></span><span class="bt py"><svg viewBox="0 0 24 24"><path d="M5 5a2 2 0 0 1 3.008-1.728l11.997 6.998a2 2 0 0 1 .003 3.458l-12 7A2 2 0 0 1 5 19z"/></svg></span></div><div class="row last" style="top:43px;width:398px"><svg viewBox="0 0 24 24" class="chv"><path d="m9 18 6-6-6-6"/></svg><span class="nm">Bomb Planted B</span><span class="x">×16</span><span class="p1">15%</span><span class="p2">38%</span><span class="bt mn"><svg viewBox="0 0 24 24"><path d="M5 12h14"/></svg></span><span class="bt"><svg viewBox="0 0 24 24"><path d="M5 12h14"/><path d="M12 5v14"/></svg></span><span class="bt py"><svg viewBox="0 0 24 24"><path d="M5 5a2 2 0 0 1 3.008-1.728l11.997 6.998a2 2 0 0 1 .003 3.458l-12 7A2 2 0 0 1 5 19z"/></svg></span></div></div></div>
<div class="card" style="left:1324px;top:798px;width:448px;height:200px"><div class="ctitle">Default<span class="cnt">50</span></div><div class="rows"><div class="row" style="top:0px;width:398px"><svg viewBox="0 0 24 24" class="chv"><path d="m9 18 6-6-6-6"/></svg><span class="nm">Heavy Yard Default</span><span class="x">×27</span><span class="p1">25%</span><span class="p2">48%</span><span class="bt mn"><svg viewBox="0 0 24 24"><path d="M5 12h14"/></svg></span><span class="bt"><svg viewBox="0 0 24 24"><path d="M5 12h14"/><path d="M12 5v14"/></svg></span><span class="bt py"><svg viewBox="0 0 24 24"><path d="M5 5a2 2 0 0 1 3.008-1.728l11.997 6.998a2 2 0 0 1 .003 3.458l-12 7A2 2 0 0 1 5 19z"/></svg></span></div><div class="row last" style="top:43px;width:398px"><svg viewBox="0 0 24 24" class="chv"><path d="m9 18 6-6-6-6"/></svg><span class="nm">Lobby Heavy Default</span><span class="x">×23</span><span class="p1">21%</span><span class="p2">65%</span><span class="bt mn"><svg viewBox="0 0 24 24"><path d="M5 12h14"/></svg></span><span class="bt"><svg viewBox="0 0 24 24"><path d="M5 12h14"/><path d="M12 5v14"/></svg></span><span class="bt py"><svg viewBox="0 0 24 24"><path d="M5 5a2 2 0 0 1 3.008-1.728l11.997 6.998a2 2 0 0 1 .003 3.458l-12 7A2 2 0 0 1 5 19z"/></svg></span></div></div></div>
</body></html>
